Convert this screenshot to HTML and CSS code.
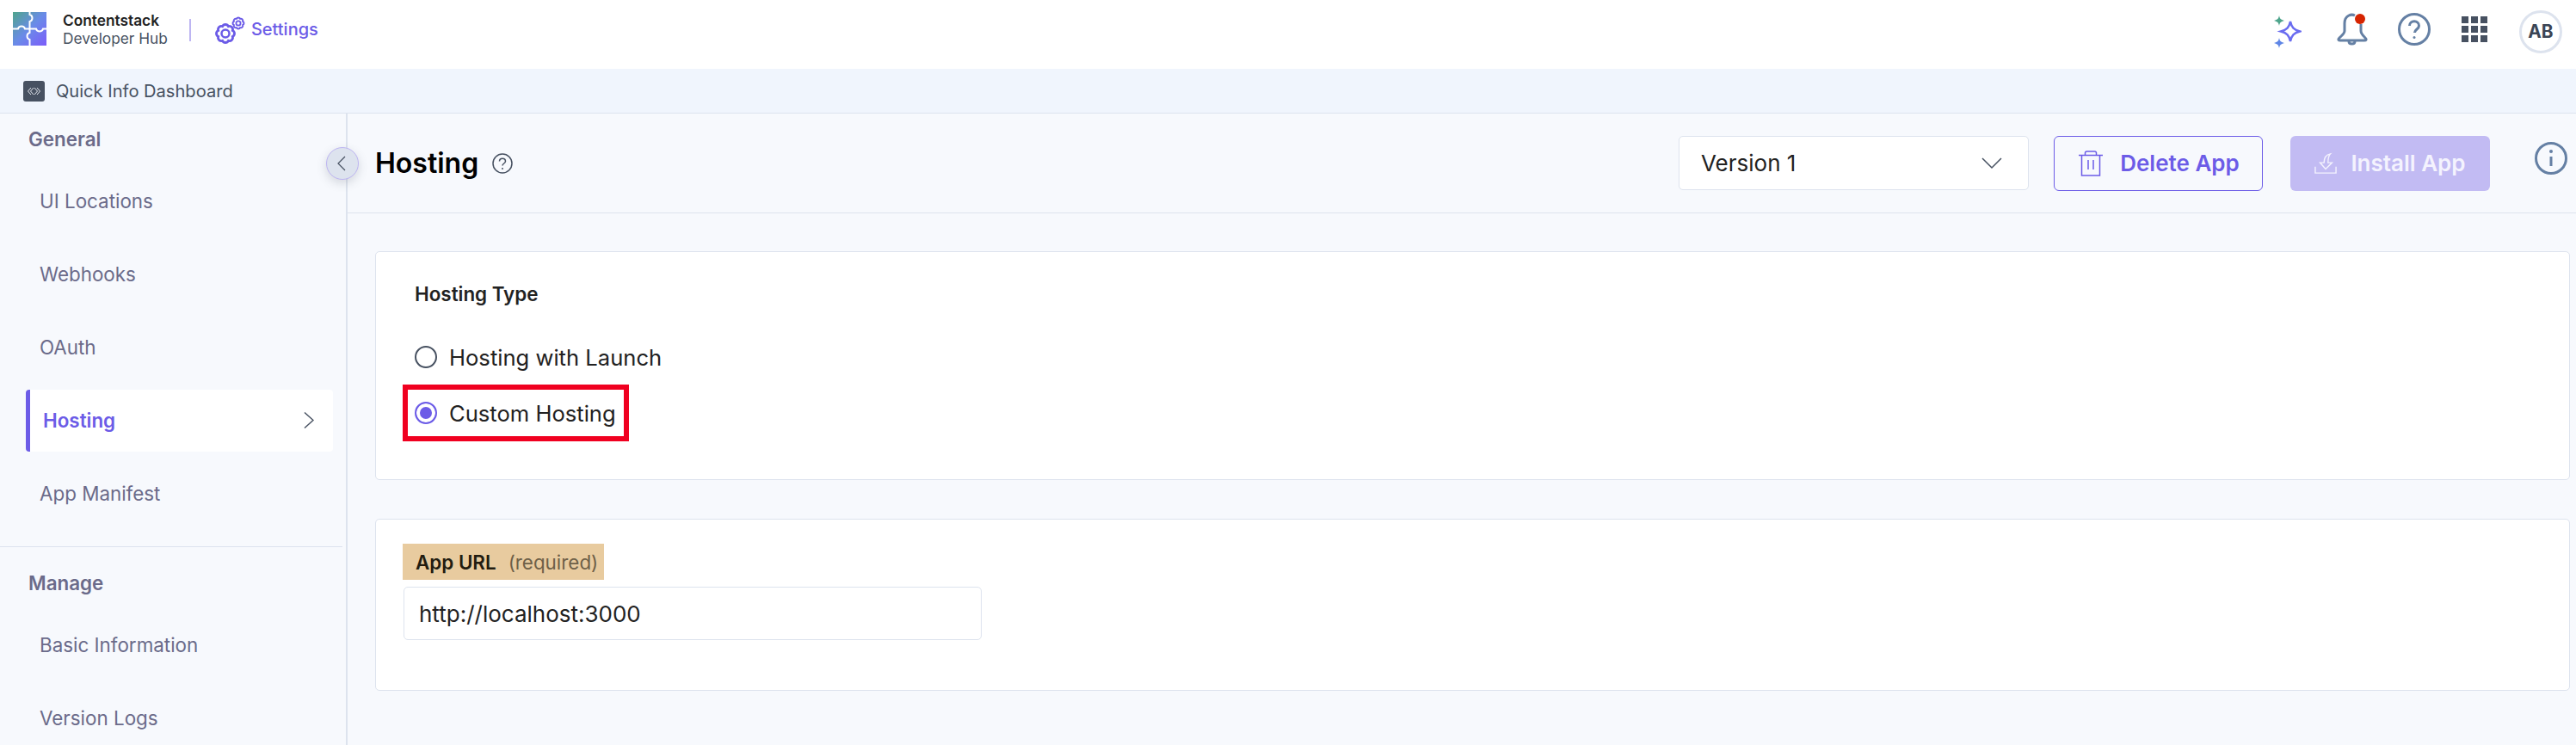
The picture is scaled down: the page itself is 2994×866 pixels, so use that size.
FILE: index.html
```html
<!DOCTYPE html>
<html lang="en">
<head>
    <meta charset="UTF-8">
    <title>Hosting</title>
    <link rel="stylesheet" href="styles.css">
</head>
<body>

<div class="app">
    <header class="topbar">
        <svg class="logo" viewBox="0 0 39 39">
            <defs>
                <linearGradient id="logo-fill" x1="0" y1="0" x2="1" y2="1">
                    <stop offset="0" stop-color="#4fa58c"/>
                    <stop offset="0.5" stop-color="#6a8be8"/>
                    <stop offset="1" stop-color="#7c5cfa"/>
                </linearGradient>
            </defs>
            <rect width="39" height="39" fill="url(#logo-fill)"/>
            <path class="logo-cut" d="M19.500 0V3c4 1 4 7 0 8V19.500H14c-1-4-7-4-8 0H0M19.500 19.500V24c-4 1-4 7 0 8V39M19.500 19.500H27c1 4 7 4 8 0H39"/>
        </svg>
        <div class="brand">
            <span class="brand-name">Contentstack</span>
            <span class="brand-sub">Developer Hub</span>
        </div>
        <span class="topbar-divider"></span>
        <svg class="gears" viewBox="0 0 36 33" fill="none">
            <path class="gear-out" d="M20.300 23.450A3.800 3.800 0 0 1 15.450 28.300A3.800 3.800 0 0 1 8.550 28.300A3.800 3.800 0 0 1 3.700 23.450A3.800 3.800 0 0 1 3.700 16.550A3.800 3.800 0 0 1 8.550 11.700A3.800 3.800 0 0 1 15.450 11.700A3.800 3.800 0 0 1 20.300 16.550A3.800 3.800 0 0 1 20.300 23.450Z"/>
            <circle cx="12" cy="20" r="4.500" stroke-width="2.500"/>
            <path class="gear-small" d="M32.170 10.140A2.400 2.400 0 0 1 29.140 13.170A2.400 2.400 0 0 1 24.860 13.170A2.400 2.400 0 0 1 21.830 10.140A2.400 2.400 0 0 1 21.830 5.860A2.400 2.400 0 0 1 24.860 2.830A2.400 2.400 0 0 1 29.140 2.830A2.400 2.400 0 0 1 32.170 5.860A2.400 2.400 0 0 1 32.170 10.140Z"/>
            <circle cx="27" cy="8" r="2.600" stroke-width="1.800"/>
        </svg>
        <span class="topbar-title">Settings</span>

        <div class="topbar-icons">
            <svg class="icon-spark" viewBox="0 0 32 38">
                <path class="spark-big" d="M19 7c1.500 7 4 9.500 11 11.500-7 2-9.500 4.500-11 11.500-1.500-7-4-9.500-11-11.500 7-2 9.500-4.500 11-11.500z"/>
                <path class="spark-green" d="M6 0c.7 3.600 1.800 4.800 6 6-4.200 1.200-5.300 2.400-6 6-.7-3.600-1.800-4.800-6-6 4.200-1.200 5.300-2.400 6-6z"/>
                <path class="spark-blue" d="M6 26c.7 3.600 1.800 4.800 6 6-4.200 1.200-5.300 2.400-6 6-.7-3.600-1.800-4.800-6-6 4.200-1.200 5.300-2.400 6-6z"/>
            </svg>
            <span class="bell-wrap">
                <svg class="icon-bell" viewBox="0 0 38 38" fill="none">
                    <path d="M22 3c-2-1-5-1-7 0-4 2-5 5-5 9v9c0 3-3 5-6 8-2 2-1 3 1 3h28c2 0 3-1 1-3-3-3-5-5-5-8v-8"/>
                    <path d="M15 33c0 4 7 4 7 0"/>
                </svg>
                <span class="bell-dot"></span>
            </span>
            <svg class="icon-help" viewBox="0 0 38 38" fill="none">
                <circle cx="19" cy="19" r="17.500"/>
                <path d="M13.500 15c0-7 11-7 11 0 0 4-5 4-5 8"/>
                <circle class="dot" cx="19" cy="28.500" r="1.500"/>
            </svg>
            <div class="apps-grid">
                <span></span><span></span><span></span>
                <span></span><span></span><span></span>
                <span></span><span></span><span></span>
            </div>
            <div class="avatar">AB</div>
        </div>
    </header>

    <div class="subbar">
        <span class="subbar-icon">
            <svg viewBox="0 0 17 10" fill="none">
                <path d="M5 1 1.500 5 5 9M8 1 4.500 5 8 9M9 1l3.500 4L9 9M12 1l3.500 4L12 9"/>
            </svg>
        </span>
        <span class="subbar-text">Quick Info Dashboard</span>
    </div>

    <div class="layout">
        <aside class="sidebar">
            <div class="nav-group">
                <div class="nav-heading">General</div>
                <a class="nav-item">UI Locations</a>
                <a class="nav-item">Webhooks</a>
                <a class="nav-item">OAuth</a>
                <a class="nav-item nav-item-active">
                    Hosting
                    <svg class="nav-chevron" viewBox="0 0 12 20" fill="none"><path d="M1 1l10 9-10 9"/></svg>
                </a>
                <a class="nav-item">App Manifest</a>
            </div>
            <div class="nav-group nav-group-manage">
                <div class="nav-heading">Manage</div>
                <a class="nav-item">Basic Information</a>
                <a class="nav-item">Version Logs</a>
            </div>
        </aside>

        <button class="collapse-btn">
            <svg viewBox="0 0 10 18" fill="none"><path d="M9 1 1 9l8 8"/></svg>
        </button>

        <main class="main">
            <div class="page-head">
                <h1 class="page-title">Hosting</h1>
                <svg class="title-help" viewBox="0 0 24 24" fill="none">
                    <circle cx="12" cy="12" r="11"/>
                    <path d="M8.500 9.500c0-4.500 7-4.500 7 0 0 2.500-3.500 2.500-3.500 5"/>
                    <circle class="dot" cx="12" cy="18" r="1"/>
                </svg>
                <div class="page-actions">
                    <div class="version-select">
                        Version 1
                        <svg viewBox="0 0 24 14" fill="none"><path d="M1 1l11 11L23 1"/></svg>
                    </div>
                    <button class="btn btn-outline">
                        <svg viewBox="0 0 28 30" fill="none">
                            <path d="M0 5.500h28M3.500 5.500V29h21V5.500M7.500 5V3c0-1 1-2 2-2h9c1 0 2 1 2 2v2M11 11v11M17 11v11"/>
                        </svg>
                        Delete App
                    </button>
                    <button class="btn btn-primary">
                        <svg viewBox="0 0 28 28" fill="none">
                            <path d="M1 18v8h26v-8"/>
                            <path d="M20 2c-6 1-8 5-8 11H7l7 8 8-8h-5c0-4 0-8 3-11z"/>
                        </svg>
                        Install App
                    </button>
                    <svg class="head-info" viewBox="0 0 38 38" fill="none">
                        <circle cx="19" cy="19" r="17.500"/>
                        <path d="M19 17v11"/>
                        <circle class="dot" cx="19" cy="11" r="2"/>
                    </svg>
                </div>
            </div>

            <div class="content">
                <section class="card card-type">
                    <div class="card-label">Hosting Type</div>
                    <div class="radio-row">
                        <span class="radio"></span>
                        Hosting with Launch
                    </div>
                    <div class="radio-row radio-row-marked">
                        <span class="radio radio-on"></span>
                        Custom Hosting
                    </div>
                </section>

                <section class="card card-url">
                    <div class="field-label"><b>App URL</b><span>(required)</span></div>
                    <div class="field-input">http://localhost:3000</div>
                </section>
            </div>
        </main>
    </div>
</div>

</body>
</html>
```

FILE: styles.css
```css
html, body {
    padding: 0;
    margin: 0;
    height: 100%;
    font-family: Inter, "Liberation Sans", sans-serif;
    color: #222222;
    background: #f7f9fd;
}

.app {
    height: 866px;
    overflow: hidden;
    display: flex;
    flex-direction: column;
}

/* top header */
.topbar {
    height: 80px;
    flex: none;
    background: white;
    display: flex;
    align-items: center;
    padding-left: 15px;
}

.logo {
    width: 39px;
    height: 39px;
    margin-top: -14px;
}

.logo-cut {
    fill: none;
    stroke: white;
    stroke-width: 2;
}

.brand {
    display: flex;
    flex-direction: column;
    margin-left: 19px;
    margin-top: -13px;
}

.brand-name {
    font-size: 17.300px;
    font-weight: 600;
    line-height: 21px;
}

.brand-sub {
    font-size: 17.300px;
    line-height: 21px;
    color: #475161;
}

.topbar-divider {
    width: 2px;
    height: 26px;
    margin: -10px 0 0 25px;
    background: #bdb5f2;
}

.gears {
    width: 36px;
    height: 33px;
    margin: -9px 0 0 28px;
    stroke: #6c5ce7;
}

.gear-out {
    stroke-width: 2.800;
}

.gear-small {
    stroke-width: 2;
}

.topbar-title {
    font-size: 20px;
    font-weight: 500;
    color: #6c5ce7;
    margin: -12px 0 0 6px;
}

.topbar-icons {
    margin-left: auto;
    display: flex;
    align-items: center;
    margin-top: -12px;
}

.icon-spark {
    width: 32px;
    height: 38px;
    margin-right: 40px;
    margin-top: 5px;
}

.spark-big {
    fill: white;
    stroke: #6a6cf0;
    stroke-width: 2.500;
}

.spark-green {
    fill: #4fa58c;
}

.spark-blue {
    fill: #5f86e6;
}

.bell-wrap {
    position: relative;
    display: block;
    width: 38px;
    height: 38px;
    margin-right: 34px;
}

.icon-bell {
    width: 38px;
    height: 38px;
    stroke: #6580a4;
    stroke-width: 3;
}

.bell-dot {
    position: absolute;
    top: 1px;
    left: 22px;
    width: 12px;
    height: 12px;
    border-radius: 50%;
    background: #d62400;
}

.icon-help {
    width: 38px;
    height: 38px;
    stroke: #6580a4;
    stroke-width: 3;
    margin-right: 36px;
}

.dot {
    fill: #6580a4;
    stroke: none;
}

.apps-grid {
    display: grid;
    grid-template-columns: repeat(3, 8px);
    grid-auto-rows: 8px;
    gap: 3px;
    margin-right: 37px;
}

.apps-grid span {
    background: #475161;
}

.avatar {
    width: 50px;
    height: 50px;
    box-sizing: border-box;
    border: 3px solid #dde3ee;
    border-radius: 50%;
    margin-right: 16px;
    margin-top: 5px;
    display: flex;
    align-items: center;
    justify-content: center;
    font-size: 20.800px;
    font-weight: 700;
    color: #3b4555;
}

/* quick info strip */
.subbar {
    height: 52px;
    flex: none;
    box-sizing: border-box;
    background: #f0f5fd;
    border-bottom: 1px solid #dde3ee;
    display: flex;
    align-items: center;
    padding-left: 27px;
}

.subbar-icon {
    width: 25px;
    height: 24px;
    background: #475161;
    border-radius: 3px;
    display: flex;
    align-items: center;
    justify-content: center;
}

.subbar-icon svg {
    width: 17px;
    height: 10px;
    stroke: #e6e9f0;
    stroke-width: 1;
}

.subbar-text {
    margin-left: 13px;
    font-size: 20.100px;
    color: #475161;
}

.layout {
    position: relative;
    flex: 1;
    display: flex;
    min-height: 0;
}

/* sidebar */
.sidebar {
    width: 404px;
    flex: none;
    box-sizing: border-box;
    border-right: 2px solid #dde3ee;
    color: #6b6b8a;
}

.nav-group {
    padding-top: 13px;
}

.nav-group-manage {
    border-top: 1px solid #dde3ee;
    margin-top: 25px;
    margin-right: 4px;
    padding-top: 25px;
}

.nav-heading {
    font-size: 22.400px;
    font-weight: 600;
    line-height: 34px;
    padding-left: 33px;
    color: #6b6b8a;
    margin-bottom: 19px;
}

.nav-item {
    display: flex;
    align-items: center;
    height: 72px;
    margin: 0 15px 13px 30px;
    padding: 0 0 2px 16px;
    font-size: 22.400px;
    box-sizing: border-box;
}

.nav-item:last-child {
    margin-bottom: 0;
}

.nav-item-active {
    background: white;
    border-left: 5px solid #6c5ce7;
    border-radius: 4px;
    padding-left: 15px;
    padding-right: 22px;
    font-weight: 600;
    color: #6c5ce7;
    justify-content: space-between;
}

.nav-chevron {
    width: 12px;
    height: 21px;
    stroke: #475161;
    stroke-width: 1.500;
}

.collapse-btn {
    position: absolute;
    left: 379px;
    top: 39px;
    width: 38px;
    height: 38px;
    padding: 0;
    border: 1px solid #bdb5f2;
    border-radius: 50%;
    background: #dde3ee;
    box-shadow: 0 4px 12px rgba(71, 81, 97, 0.2);
    display: flex;
    align-items: center;
    justify-content: center;
}

.collapse-btn svg {
    width: 10px;
    height: 18px;
    margin-right: 3px;
    stroke: #475161;
    stroke-width: 1.200;
}

/* main area */
.main {
    flex: 1;
    min-width: 0;
}

.page-head {
    height: 116px;
    box-sizing: border-box;
    border-bottom: 1px solid #dde3ee;
    padding: 0 10px 0 32px;
    display: flex;
    align-items: center;
}

.page-title {
    margin: 0;
    font-size: 32px;
    font-weight: 600;
    color: black;
}

.title-help {
    width: 24px;
    height: 24px;
    margin-left: 16px;
    stroke: #475161;
    stroke-width: 1.500;
}

.title-help .dot {
    fill: #475161;
}

.page-actions {
    margin-left: auto;
    display: flex;
    align-items: center;
}

.version-select {
    width: 407px;
    height: 63px;
    box-sizing: border-box;
    background: white;
    border: 1px solid #dde3ee;
    border-radius: 5px;
    padding: 0 30px 0 25px;
    font-size: 26px;
    display: flex;
    align-items: center;
    justify-content: space-between;
}

.version-select svg {
    width: 24px;
    height: 14px;
    stroke: #475161;
    stroke-width: 1.500;
}

.btn {
    height: 64px;
    box-sizing: border-box;
    border-radius: 6px;
    font-family: inherit;
    font-size: 26px;
    font-weight: 600;
    display: flex;
    align-items: center;
    justify-content: center;
    gap: 20px;
}

.btn-outline {
    width: 243px;
    margin-left: 29px;
    padding-left: 8px;
    background: #f7f9fd;
    border: 1px solid #6c5ce7;
    color: #6c5ce7;
}

.btn-outline svg {
    width: 28px;
    height: 30px;
    stroke: #6c5ce7;
    stroke-width: 1.500;
}

.btn-primary {
    width: 232px;
    margin-left: 32px;
    background: #c2bbf3;
    border: 0;
    color: #f4f3fe;
    gap: 16px;
}

.btn-primary svg {
    width: 26px;
    height: 26px;
    stroke: #f4f3fe;
    stroke-width: 1.500;
}

.head-info {
    width: 38px;
    height: 38px;
    margin: -11px 0 0 52px;
    stroke: #6580a4;
    stroke-width: 3;
}

/* cards */
.content {
    padding: 44px 7px 0 32px;
}

.card {
    background: white;
    border: 1px solid #dde3ee;
    border-radius: 5px;
    box-sizing: border-box;
}

.card-type {
    height: 266px;
    padding: 32px 30px 0 45px;
}

.card-url {
    height: 200px;
    margin-top: 45px;
    padding: 28px 30px 0 31px;
}

.card-label {
    font-size: 22.400px;
    font-weight: 600;
    line-height: 34px;
    margin-bottom: 24px;
}

.radio-row {
    display: flex;
    align-items: center;
    height: 64px;
    font-size: 25.600px;
    gap: 14px;
}

.radio-row-marked {
    box-sizing: border-box;
    width: 263px;
    height: 66px;
    border: 6px solid #f00020;
    margin-left: -14px;
    padding-left: 8px;
    white-space: nowrap;
}

.radio {
    width: 26px;
    height: 26px;
    box-sizing: border-box;
    border: 2px solid #475161;
    border-radius: 50%;
    background: white;
}

.radio-on {
    border-color: #6c5ce7;
    box-shadow: inset 0 0 0 4px white;
    background: #6c5ce7;
}

.field-label {
    width: 234px;
    height: 42px;
    box-sizing: border-box;
    background: #e8cb9f;
    padding-left: 15px;
    display: flex;
    align-items: center;
    font-size: 22.400px;
    color: #221c10;
}

.field-label b {
    font-weight: 600;
}

.field-label span {
    margin-left: 14px;
    color: #6e6048;
}

.field-input {
    width: 672px;
    height: 62px;
    box-sizing: border-box;
    margin: 8px 0 0 1px;
    background: white;
    border: 1px solid #dde3ee;
    border-radius: 5px;
    padding-left: 17px;
    font-size: 26px;
    display: flex;
    align-items: center;
}
```
